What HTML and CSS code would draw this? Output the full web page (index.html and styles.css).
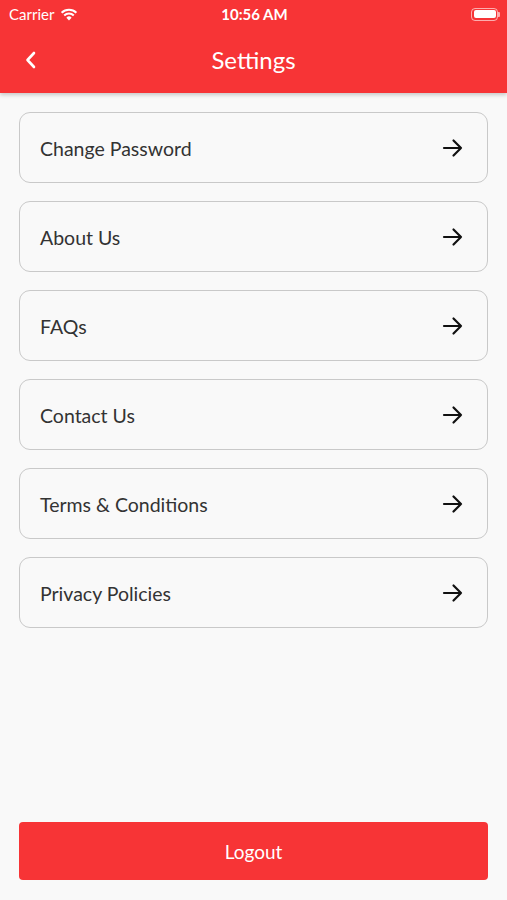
FILE: index.html
```html
<!DOCTYPE html>
<html lang="en">
<head>
    <meta charset="utf-8">
    <title>Settings</title>
    <link rel="stylesheet" href="styles.css">
</head>
<body>
    <header class="header">
        <div class="status-bar">
            <div class="carrier">
                Carrier
                <svg class="wifi" width="18" height="13" viewBox="0 0 16 12">
                    <path d="M8 11.5 L5.6 8.9 A3.4 3.4 0 0 1 10.4 8.9 Z" fill="#fff"/>
                    <path d="M3.6 6.9 A6.3 6.3 0 0 1 12.4 6.9" stroke="#fff" stroke-width="1.9" fill="none"/>
                    <path d="M1.2 4.4 A9.8 9.8 0 0 1 14.8 4.4" stroke="#fff" stroke-width="1.9" fill="none"/>
                </svg>
            </div>
            <div class="time">10:56 AM</div>
            <div class="battery">
                <div class="battery-body"><div class="battery-fill"></div></div>
                <div class="battery-cap"></div>
            </div>
        </div>
        <div class="nav-bar">
            <svg class="back" width="14" height="20" viewBox="0 0 14 20">
                <path d="M10 3 L3.5 10 L10 17" stroke="#fff" stroke-width="2.6" fill="none" stroke-linecap="round" stroke-linejoin="round"/>
            </svg>
            <h1>Settings</h1>
        </div>
    </header>

    <main class="content">
        <ul class="menu">
            <li class="menu-item"><span>Change Password</span><svg class="arrow" viewBox="0 0 22 20"><path d="M2 10 H19 M11.5 2.5 L19 10 L11.5 17.5" stroke="#111" stroke-width="2.2" fill="none" stroke-linecap="round" stroke-linejoin="round"/></svg></li>
            <li class="menu-item"><span>About Us</span><svg class="arrow" viewBox="0 0 22 20"><path d="M2 10 H19 M11.5 2.5 L19 10 L11.5 17.5" stroke="#111" stroke-width="2.2" fill="none" stroke-linecap="round" stroke-linejoin="round"/></svg></li>
            <li class="menu-item"><span>FAQs</span><svg class="arrow" viewBox="0 0 22 20"><path d="M2 10 H19 M11.5 2.5 L19 10 L11.5 17.5" stroke="#111" stroke-width="2.2" fill="none" stroke-linecap="round" stroke-linejoin="round"/></svg></li>
            <li class="menu-item"><span>Contact Us</span><svg class="arrow" viewBox="0 0 22 20"><path d="M2 10 H19 M11.5 2.5 L19 10 L11.5 17.5" stroke="#111" stroke-width="2.2" fill="none" stroke-linecap="round" stroke-linejoin="round"/></svg></li>
            <li class="menu-item"><span>Terms &amp; Conditions</span><svg class="arrow" viewBox="0 0 22 20"><path d="M2 10 H19 M11.5 2.5 L19 10 L11.5 17.5" stroke="#111" stroke-width="2.2" fill="none" stroke-linecap="round" stroke-linejoin="round"/></svg></li>
            <li class="menu-item"><span>Privacy Policies</span><svg class="arrow" viewBox="0 0 22 20"><path d="M2 10 H19 M11.5 2.5 L19 10 L11.5 17.5" stroke="#111" stroke-width="2.2" fill="none" stroke-linecap="round" stroke-linejoin="round"/></svg></li>
        </ul>

        <button class="logout-btn">Logout</button>
    </main>
</body>
</html>
```

FILE: styles.css
```css
:root {
    --primary-color: #f73436;
    --background: #f9f9f9;
    --text-color: #333333;
    --border-color: #c9c9c9;
}

* {
    box-sizing: border-box;
    margin: 0;
    padding: 0;
    font-family: Lato, 'Open Sans', sans-serif;
}

body {
    background: var(--background);
    color: var(--text-color);
    width: 507px;
    height: 900px;
    overflow: hidden;
    display: flex;
    flex-direction: column;
}

/* Header */
.header {
    background: var(--primary-color);
    height: 93px;
    box-shadow: 0 2px 4px rgba(0, 0, 0, 0.2);
    position: relative;
    z-index: 1;
}

.status-bar {
    height: 28px;
    display: flex;
    align-items: center;
    justify-content: space-between;
    padding: 0 7px 0 9px;
    color: white;
    font-family: 'Liberation Sans', sans-serif;
    font-size: 15px;
}

.carrier {
    display: flex;
    align-items: center;
    gap: 6px;
    width: 110px;
}

.time {
    font-weight: bold;
    font-size: 15px;
}

.battery {
    width: 110px;
    display: flex;
    justify-content: flex-end;
    align-items: center;
}

.battery-body {
    width: 27px;
    height: 13px;
    border: 1px solid rgba(255, 255, 255, 0.6);
    border-radius: 4px;
    padding: 1.5px;
}

.battery-fill {
    background: white;
    height: 100%;
    border-radius: 2px;
}

.battery-cap {
    width: 2px;
    height: 5px;
    background: rgba(255, 255, 255, 0.6);
    border-radius: 0 1px 1px 0;
}

.nav-bar {
    height: 65px;
    display: flex;
    align-items: center;
    justify-content: center;
    position: relative;
}

.nav-bar h1 {
    color: white;
    font-size: 24px;
    font-weight: 400;
    margin-top: -3px;
}

.back {
    position: absolute;
    left: 24px;
    top: 22px;
}

/* Menu */
.content {
    flex: 1;
    display: flex;
    flex-direction: column;
    justify-content: space-between;
    padding: 19px 19px 20px;
}

.menu {
    list-style: none;
    display: flex;
    flex-direction: column;
    gap: 18px;
}

.menu-item {
    height: 71px;
    border: 1px solid var(--border-color);
    border-radius: 11px;
    background: var(--background);
    display: flex;
    align-items: center;
    justify-content: space-between;
    padding: 0 23px 0 20px;
    font-size: 19.5px;
}

.menu-item span {
    margin-top: 1px;
}

.arrow {
    width: 22px;
    height: 20px;
}

.logout-btn {
    height: 58px;
    background: var(--primary-color);
    color: white;
    border: none;
    border-radius: 4px;
    font-size: 19px;
}
```
